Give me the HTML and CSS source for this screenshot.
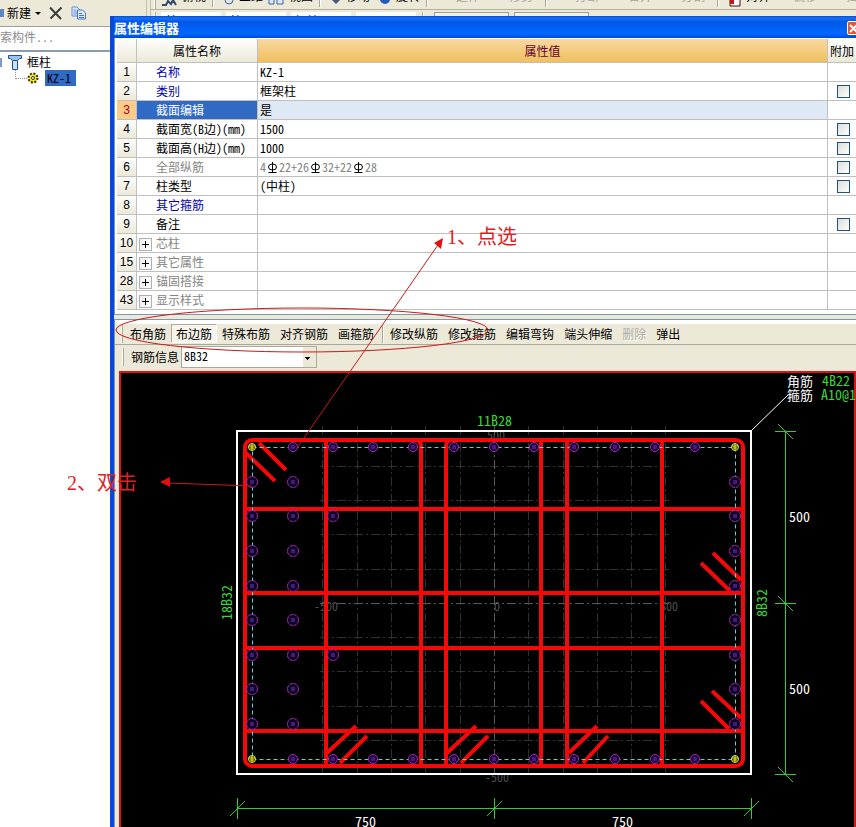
FILE: index.html
```html
<!DOCTYPE html>
<html lang="zh-CN">
<head>
<meta charset="utf-8">
<title>属性编辑器</title>
<link rel="stylesheet" href="styles.css">
</head>
<body>
<div class="app">
  <aside class="side">
    <div class="side-tools">
      <span class="new-icon"></span>
      <button class="plain">新建<i class="caret"></i></button>
      <button class="plain" aria-label="删除"><svg width="14" height="14" viewBox="0 0 14 14"><path d="M1 1.5L12 13M12.500 1.500L1.500 12.500" stroke="#3c3c3c" stroke-width="2" fill="none"/></svg></button>
      <button class="plain" aria-label="复制"><svg width="16" height="14" viewBox="0 0 16 14"><path d="M1 1h5l3 3v6H1z" fill="#dceafc" stroke="#6a92d0"/><path d="M2.500 4h3M2.500 6h4M2.500 8h4" stroke="#6a92d0"/><path d="M6.500 4h5l3 3v6h-8z" fill="#dceafc" stroke="#4878c0"/><path d="M8 7.500h3M8 9.500h5M8 11.500h5" stroke="#4878c0"/></svg></button>
    </div>
    <input class="search" type="text" aria-label="搜索构件" placeholder="索构件...">
    <ul class="tree">
      <li><i class="expander"></i><svg class="col-icon" width="14" height="15" viewBox="0 0 14 15"><path d="M.5.500h13v3h-2l-2 2h-5l-2-2h-2z" fill="#9cc4ee" stroke="#24508c"/><path d="M4.500 5.500h5v9h-5z" fill="#c8e0f8" stroke="#24508c"/></svg>框柱</li>
      <li class="child"><i class="branch"></i><svg width="12" height="12" viewBox="-6 -6 12 12"><circle r="4.500" fill="#f0e818" stroke="#383000" stroke-width="2" stroke-dasharray="2 1.500"/><circle r="1.500" fill="#fff" stroke="#383000"/></svg><a class="picked" href="#">KZ-1</a></li>
    </ul>
  </aside>
  <div class="bars">
    <div class="bar bar-edit">
      <i class="grip"></i><svg width="16" height="6" viewBox="0 0 16 6"><path d="M1 5h4l2-4 3 3 2-4 3 5" stroke="#34486c" stroke-width="2" fill="none"/></svg><span>俯视</span><i class="sep"></i>
      <svg width="10" height="6" viewBox="0 0 10 6"><circle cx="5" cy="0" r="4" fill="#dce4f0" stroke="#506890"/></svg><span>三维</span>
      <svg width="16" height="6" viewBox="0 0 16 6"><path d="M1 0v4h5V0M9 0v4h6V0" fill="#dceafc" stroke="#4060a0"/></svg><span>视图</span><i class="sep"></i>
      <svg width="10" height="6" viewBox="0 0 10 6"><path d="M1 0h8L5 4z" fill="#40587c"/></svg><span>移动</span>
      <svg width="16" height="6" viewBox="0 0 16 6"><circle cx="10" cy="-1" r="5" fill="#2858b8"/></svg><span>旋转</span><i class="sep"></i>
      <span class="off">▪延伸</span><span class="off">▪修剪</span><i class="sep"></i><span class="off">▪打断</span><span class="off">▪合并</span><span class="off">▪分割</span><i class="sep"></i>
      <svg width="12" height="7" viewBox="0 0 12 7"><path d="M1 0v6h10V0" fill="#fff" stroke="#500"/><path d="M1 0h4v4H1z" fill="#c01818"/></svg><span>对齐</span><span class="off">▪偏移</span><span class="off">▪拉伸</span>
    </div>
    <div class="bar bar-pick">
      <i class="grip"></i><span class="box">首层</span><span class="box">柱</span><span class="box">框柱</span><span class="box"></span><i class="sep"></i><span class="box hatch"></span><span class="box hatch"></span>
    </div>
  </div>
</div>

<section class="dialog">
  <header class="title"><h1>属性编辑器</h1><button class="close" aria-label="关闭"><svg width="9" height="9" viewBox="0 0 9 9"><path d="M1 1l7 7M8 1L1 8" stroke="#fff" stroke-width="2"/></svg></button></header>
  <div class="sheet">
  <table class="props">
    <colgroup><col class="c-no"><col class="c-name"><col><col class="c-extra"></colgroup>
    <thead><tr><th></th><th>属性名称</th><th class="active">属性值</th><th class="extra">附加</th></tr></thead>
    <tbody>
      <tr><th>1</th><td class="name key">名称</td><td>KZ-1</td><td></td></tr>
      <tr><th>2</th><td class="name key">类别</td><td>框架柱</td><td class="tick"><input type="checkbox" aria-label="类别 附加"></td></tr>
      <tr class="current"><th>3</th><td class="name">截面编辑</td><td>是</td><td></td></tr>
      <tr><th>4</th><td class="name">截面宽(B边)(mm)</td><td>1500</td><td class="tick"><input type="checkbox" aria-label="截面宽 附加"></td></tr>
      <tr><th>5</th><td class="name">截面高(H边)(mm)</td><td>1000</td><td class="tick"><input type="checkbox" aria-label="截面高 附加"></td></tr>
      <tr><th>6</th><td class="name dim">全部纵筋</td><td class="dim">4<svg class="bar-sign" viewBox="0 0 11 11"><use href="#rebar"/></svg>22+26<svg class="bar-sign" viewBox="0 0 11 11"><use href="#rebar"/></svg>32+22<svg class="bar-sign" viewBox="0 0 11 11"><use href="#rebar"/></svg>28</td><td class="tick"><input type="checkbox" aria-label="全部纵筋 附加"></td></tr>
      <tr><th>7</th><td class="name">柱类型</td><td>(中柱)</td><td class="tick"><input type="checkbox" aria-label="柱类型 附加"></td></tr>
      <tr><th>8</th><td class="name key">其它箍筋</td><td></td><td></td></tr>
      <tr><th>9</th><td class="name">备注</td><td></td><td class="tick"><input type="checkbox" aria-label="备注 附加"></td></tr>
      <tr><th>10</th><td class="group dim"><button class="plus" aria-label="展开"></button>芯柱</td><td></td><td></td></tr>
      <tr><th>15</th><td class="group dim"><button class="plus" aria-label="展开"></button>其它属性</td><td></td><td></td></tr>
      <tr><th>28</th><td class="group dim"><button class="plus" aria-label="展开"></button>锚固搭接</td><td></td><td></td></tr>
      <tr><th>43</th><td class="group dim"><button class="plus" aria-label="展开"></button>显示样式</td><td></td><td></td></tr>
    </tbody>
  </table>
  </div>

  <div class="editor">
    <nav class="tools">
      <i class="grip"></i>
      <button>布角筋</button><button class="down">布边筋</button><button>特殊布筋</button><button>对齐钢筋</button><button>画箍筋</button><i class="sep"></i><button>修改纵筋</button><button>修改箍筋</button><button>编辑弯钩</button><button>端头伸缩</button><button disabled>删除</button><button>弹出</button>
    </nav>
    <div class="info">
      <i class="grip"></i>
      <label for="rebar-info">钢筋信息</label>
      <select id="rebar-info"><option>8B32</option></select>
    </div>
    <div class="canvas">
      <svg viewBox="121 373 733 454" preserveAspectRatio="xMinYMin meet">
        <defs>
          <g id="rebar" fill="none" stroke="#000"><ellipse cx="5.500" cy="5" rx="4" ry="3"/><path d="M5.500 0v10M1.500 10.500h8"/></g>
          <g id="s"><circle r="4.500" fill="#10002c" stroke="#b428c4"/><path d="M-2-1h4M-2 1h4" stroke="#8030e0"/></g>
          <g id="b"><circle r="5.500" fill="#08001c" stroke="#b428c4" stroke-dasharray="3.500 .8"/><path d="M-2-1h4M-2 1h4" stroke="#8030e0"/></g>
          <g id="y"><circle r="3.500" fill="#202000" stroke="#f0f030"/><path d="M-3-1h6M-2 1h4M0-3v6" stroke="#f0f030"/></g>
          <g id="row"><use href="#s" x="293"/><use href="#s" x="333"/><use href="#s" x="373"/><use href="#s" x="413"/><use href="#s" x="454"/><use href="#s" x="494"/><use href="#s" x="534"/><use href="#s" x="574"/><use href="#s" x="615"/><use href="#s" x="655"/><use href="#s" x="695"/></g>
          <g id="stack"><use href="#b" y="482"/><use href="#b" y="516"/><use href="#b" y="551"/><use href="#b" y="586"/><use href="#b" y="620"/><use href="#b" y="655"/><use href="#b" y="689"/><use href="#b" y="724"/></g>
        </defs>
        <path class="grid" d="M322.500 426V777M357.500 426V777M391.500 426V777M425.500 426V777M460.500 426V777M528.500 426V777M563.500 426V777M597.500 426V777M631.500 426V777M665.500 426V777M320 466.500H672M320 500.500H672M320 534.500H672M320 569.500H672M320 637.500H672M320 671.500H672M320 706.500H672M320 740.500H672"/>
        <path class="grid axis" d="M494.500 426V777M320 603.500H672"/>
        <g class="faint"><text x="487" y="440">500</text><text x="485" y="782">-500</text><text x="314" y="611">-500</text><text x="494" y="611">0</text><text x="660" y="611">500</text></g>
        <rect x="237" y="431" width="514" height="343" fill="none" stroke="#fff" stroke-width="2"/>
        <path d="M751 431L788 395" stroke="#fff"/>
        <g class="hoop">
          <rect x="245" y="440" width="498" height="326" rx="7"/>
          <path d="M326 440V766M421 766V446q0-4-4-6M446 766V446q0-4 4-6M541 440V766M567 440V766M662 440V766M245 509H739q4 0 4 4M245 593H743M245 648H739q4 0 4 4M245 731H743"/>
          <path d="M259 443L286 470M246 453L275 481M327 753L356 726M340 763L367 736M447 753L476 726M461 763L488 736M569 753L597 726M583 763L608 736M713 553L741 580M701 563L730 591M712 691L741 718M701 701L729 729"/>
        </g>
        <path class="cover" d="M252.500 447.500H735.500V759.500H252.500Z"/>
        <use href="#row" y="447"/><use href="#row" y="759"/>
        <use href="#stack" x="252"/><use href="#stack" x="293"/><use href="#stack" x="735"/>
        <use href="#b" x="333" y="516"/><use href="#b" x="333" y="655"/>
        <use href="#y" x="252" y="447"/><use href="#y" x="735" y="447"/><use href="#y" x="252" y="759"/><use href="#y" x="735" y="759"/>
        <path class="dims" d="M237 808.500H752M237.500 798V819M494.500 798V819M751.500 798V819M230 816L245 801M487 816L502 801M744 816L759 801M785.500 431V775M775 431.500H796M775 603.500H796M775 774.500H796M778 424L793 439M778 596L793 611M778 767L793 782"/>
        <g class="green"><text x="477" y="426">11B28</text><text transform="translate(232 620) rotate(-90)">18B32</text><text transform="translate(767 617) rotate(-90)">8B32</text><text x="822" y="386">4B22</text><text x="821" y="400">A10@100</text></g>
        <g class="white"><text x="789" y="522">500</text><text x="789" y="694">500</text><text x="355" y="827">750</text><text x="612" y="827">750</text></g>
        <g class="white label"><text x="787" y="386">角筋</text><text x="787" y="400">箍筋</text></g>
      </svg>
    </div>
  </div>
</section>

<svg class="notes" viewBox="0 0 856 827" preserveAspectRatio="xMinYMin meet">
  <ellipse cx="302" cy="330" rx="186" ry="22"/>
  <path d="M297 448L440 242M252 486L168 483"/>
  <path class="tip" d="M443 238l-9 5 7 6zM160 482l10-5v10z"/>
  <text x="447" y="244">1、点选</text>
  <text x="67" y="490">2、双击</text>
</svg>
</body>
</html>
```
FILE: styles.css
```css
* { box-sizing: border-box; }
html, body { height: 100%; }
body {
  margin: 0;
  position: relative;
  overflow: hidden;
  background: #fff;
  color: #000;
  font: 12px/18px "Noto Sans Mono CJK SC", "Noto Sans CJK SC", sans-serif;
}
button, input, select { font: inherit; color: inherit; margin: 0; }
ul { list-style: none; margin: 0; padding: 0; }
svg { display: block; }

.app { display: flex; height: 100%; }
.side { width: 147px; flex: none; border-right: 1px solid #c4c0b0; }
.side-tools {
  display: flex;
  align-items: center;
  height: 26px;
  background: #ece9d8;
}
.new-icon { width: 4px; height: 8px; margin-right: 3px; background: #5c86c8; }
.plain { display: flex; align-items: center; gap: 4px; margin-right: 8px; border: 0; padding: 0; background: none; }
.caret { border: 3px solid transparent; border-top-color: #000; border-bottom: 0; }
.search {
  display: block;
  width: 100%;
  height: 24px;
  padding: 0 0 4px;
  border: 0;
  border-top: 1px solid #a0a098;
  background: #fff;
}
.search::placeholder { color: #8c8c8c; opacity: 1; }
.tree { border-top: 2px solid #8c9cac; padding-top: 2px; }
.tree li { display: flex; align-items: center; height: 16px; }
.expander { width: 2px; height: 9px; background: #7c9cc8; }
.col-icon { margin: 0 5px 0 6px; }
.branch { width: 12px; height: 9px; margin-left: 15px; margin-bottom: 8px; border-left: 1px dotted #909090; border-bottom: 1px dotted #909090; }
.picked { margin-left: 6px; padding: 0 5px 0 2px; line-height: 16px; background: #316ac5; color: #000; text-decoration: none; }

.bars { flex: 1; min-width: 0; background: #ece9d8; overflow: hidden; padding-left: 3px; }
.bar { display: flex; align-items: flex-start; white-space: nowrap; gap: 5px; overflow: hidden; border-left: 1px solid #c4c0b0; padding-left: 3px; }
.bar svg { flex: none; }
.bar span { margin-top: -13px; }
.bar-edit { height: 10px; border-bottom: 1px solid #b4b0a0; }
.bar .sep { height: 7px; margin: 0 5px 0 1px; }
.bar .off { color: #a8a498; margin: -13px 6px 0; }
.bar-pick { height: 40px; padding-top: 2px; }
.bar .box { width: 60px; margin: 0; padding-left: 4px; background: #fff; line-height: 18px; height: 20px; }
.bar .box.hatch { width: 75px; background: #f4f2e8; border: 1px solid #a0a098; }

.grip { flex: none; width: 2px; height: 18px; border-left: 1px solid #fff; border-right: 1px solid #aca899; }
.sep { flex: none; width: 2px; height: 18px; border-left: 1px solid #aca899; border-right: 1px solid #fff; }

.dialog {
  position: absolute;
  top: 16px;
  right: 0;
  bottom: 0;
  left: 110px;
  display: flex;
  flex-direction: column;
  overflow: hidden;
  border-left: 4px solid #0848d8;
  background: #ece9d8;
}
.title {
  flex: none;
  display: flex;
  align-items: center;
  justify-content: space-between;
  height: 22px;
  margin-left: -4px;
  padding: 2px 0 0 4px;
  background: linear-gradient(#0848c8 0, #1870f8 2px, #0058e8 6px, #0068ff 18px, #0048d0 22px);
}
.title h1 { margin: 0; font-size: 13px; line-height: 20px; color: #fff; }
.close { display: grid; place-items: center; width: 13px; height: 14px; margin-right: -4px; padding: 0; border: 1px solid #fff; border-radius: 2px; background: #e05838; }

.sheet { flex: none; padding: 1px 0 4px 2px; background: #fff; border-bottom: 1px solid #7c98ac; border-left: 1px solid #7c98ac; margin-bottom: 4px; }
.props { width: 100%; table-layout: fixed; border-collapse: separate; border-spacing: 0; }
.c-no { width: 20px; }
.c-name { width: 121px; }
.c-extra { width: 28px; }
.props th, .props td { height: 19px; padding: 0 0 0 2px; border: 0 solid #c0c0c0; border-width: 0 1px 1px 0; line-height: 18px; font-weight: 400; text-align: left; white-space: nowrap; overflow: hidden; }
.props th { padding: 0; text-align: center; background: linear-gradient(#fdfdfb, #ece9d8); }
.props thead th { height: 24px; line-height: 22px; }
.props thead th.active { background: linear-gradient(#f8d8a0, #f0c060); color: #600030; }
.props thead .extra, .props td:last-child { border-right: 0; }
.props tbody th { font-family: "Liberation Sans", sans-serif; }
.props .name { padding-left: 19px; }
.props .key { color: #0000b0; }
.props .dim { color: #848484; }
.props .current th { background: #ffcc88; color: #a00020; }
.props .current td { background: #dfe8f5; }
.props .current .name { background: #316ac5; color: #fff; }
.props .current td:last-child { background: #fff; }
.props .tick { padding-left: 9px; }
.tick input { display: block; appearance: none; width: 13px; height: 13px; border: 1px solid #1c5180; background: linear-gradient(135deg, #dcdcd7, #fff); }
.group .plus { display: inline-block; position: relative; width: 13px; height: 13px; margin-right: 4px; padding: 0; border: 1px solid #b0b0b0; background: linear-gradient(90deg, #f0f0f0, #fff); vertical-align: middle; }
.plus::before, .plus::after { content: ""; position: absolute; background: #000; }
.plus::before { left: 2px; top: 5px; width: 7px; height: 1px; }
.plus::after { left: 5px; top: 2px; width: 1px; height: 7px; }
.bar-sign { display: inline-block; width: 11px; height: 11px; margin: 0 1px; vertical-align: -1px; }

.editor { flex: 1; min-height: 0; display: flex; flex-direction: column; border-top: 1px solid #7c98ac; border-left: 1px solid #7c98ac; padding-left: 4px; }
.tools, .info { flex: none; display: flex; align-items: center; }
.tools { height: 25px; margin-left: -4px; padding: 3px 0 0 6px; border-bottom: 1px solid #aca899; box-shadow: inset 0 4px #fff; }
.tools button { border: 1px solid transparent; padding: 0 4px; height: 19px; line-height: 16px; background: none; white-space: nowrap; }
.tools .grip { margin-right: 2px; }
.tools .sep { margin: 0 1px 0 3px; }
.tools .down { border-color: #aca899 #fff #fff #aca899; background: #f6f4ec; }
.tools button:disabled { color: #aca899; text-shadow: 1px 1px #fff; }
.info { height: 26px; padding: 0 0 2px 3px; }
.info label { margin: 0 2px 0 7px; }
.info select {
  width: 136px;
  height: 22px;
  padding: 0 2px 2px;
  border: 1px solid #aca899;
  border-radius: 0;
  appearance: none;
  background:
    linear-gradient(#000, #000) right 6px top 10px / 5px 1px no-repeat,
    linear-gradient(#000, #000) right 7px top 11px / 3px 1px no-repeat,
    linear-gradient(#000, #000) right 8px top 12px / 1px 1px no-repeat,
    linear-gradient(#ece9d8, #ece9d8) right / 13px 100% no-repeat,
    #fff;
}
.canvas { flex: 1; min-height: 0; background: #000; border: 2px solid #d81414; border-bottom: 0; }
.canvas svg { width: 100%; overflow: visible; }
.canvas text { font-size: 14px; }
.grid { stroke: #303030; fill: none; stroke-dasharray: 9 3 2 3; }
.grid.axis { stroke: #585858; }
.hoop { stroke: #f40808; stroke-width: 4; fill: none; }
.cover { stroke: #50d8d8; fill: none; stroke-dasharray: 4 3; }
.dims { stroke: #30cc30; fill: none; }
.green { fill: #38dc38; }
.white { fill: #fff; }
.canvas .faint { fill: #505050; }
.canvas .faint text { font-size: 12px; }
.canvas .label text { font-size: 13px; }

.notes { position: absolute; top: 0; left: 0; width: 100%; pointer-events: none; fill: none; stroke: #cc1818; }
.notes .tip { fill: #e01010; stroke: none; }
.notes text { fill: #e02020; stroke: none; font: 20px "Liberation Serif", "Noto Sans CJK SC", serif; }
```
